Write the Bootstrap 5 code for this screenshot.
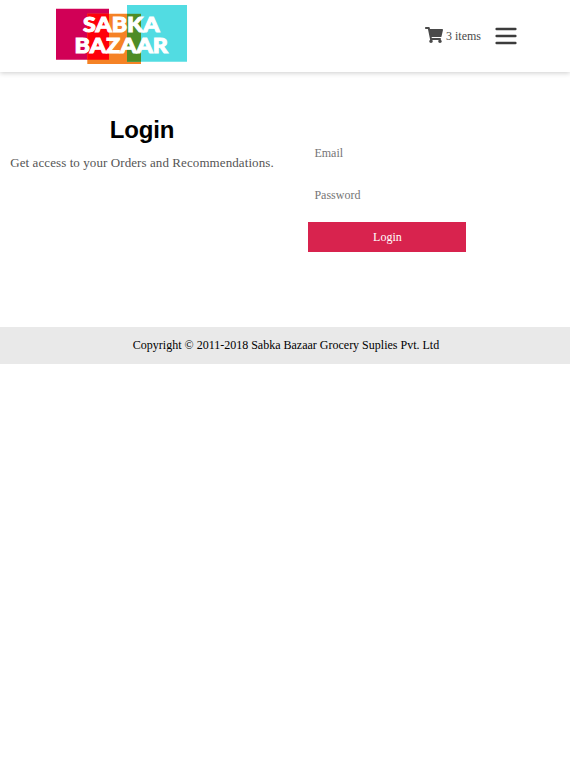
<!DOCTYPE html>
<html lang="en">
<head>
<meta charset="utf-8">
<meta name="viewport" content="width=device-width, initial-scale=1">
<title>Sabka Bazaar - Login</title>
<link href="https://cdn.jsdelivr.net/npm/bootstrap@5.3.0/dist/css/bootstrap.min.css" rel="stylesheet">
<style>
body{font-family:"Liberation Serif","Times New Roman",serif;font-size:12px;line-height:16px;color:#000;background:#fff}
.site-header{height:72px;padding:4px 53px 0 55px;box-shadow:0 1px 5px rgba(0,0,0,.2)}
.brand-art{width:133px;height:62px;font-family:Lato,sans-serif;font-weight:900}
.header-tools{height:64px;color:#4a4a4a}
.cart-icon{margin:0 3px 2px 0}
.menu-button{width:22px;height:18px;margin-left:14px}
.login-area{height:255px;padding-top:44px}
.intro{width:284px}
.intro h1{font:bold 24px/28px "Liberation Sans",Arial,sans-serif;letter-spacing:-.2px}
.intro p{font-size:13px;letter-spacing:.085px;color:#555;padding-top:11px}
.login-form{width:158px;margin-left:24.4px;padding-top:22px}
.login-form .form-control{height:30px;padding:0 6px;border:0;border-radius:0;font-size:12px;line-height:30px;margin-bottom:12px}
.login-form .form-control::placeholder{color:#757575}
.login-form .btn{height:30px;padding:0;font-size:12px;line-height:30px;background:#d8234e;color:#fff;border:0}
.site-footer{height:37px;line-height:36px;background:#e9e9e9;padding-left:2px}
</style>
<script src="https://cdn.jsdelivr.net/npm/bootstrap@5.3.0/dist/js/bootstrap.bundle.min.js" defer></script>
</head>
<body>
<header class="site-header d-flex justify-content-between align-items-start">
  <a href="#" aria-label="Sabka Bazaar">
    <svg class="brand-art d-block" viewBox="0 0 133 62">
      <path fill="#d10056" d="M1 4.7h53v51H1z"/>
      <path fill="#f58225" d="M32.3 9.8H86V60H32.3z"/>
      <path fill="#ff0009" d="M32.3 9.8H54v45.9H32.3z"/>
      <path fill="#52dce2" d="M72 1h60v56.8H72z"/>
      <path fill="#4e8c26" d="M72 9.8h14v48H72z"/>
      <g fill="#fff" stroke="#fff" stroke-width="1" font-size="20.5">
        <text x="28" y="28.3" textLength="76.5" lengthAdjust="spacingAndGlyphs">SABKA</text>
        <text x="19.5" y="48.7" textLength="93.5" lengthAdjust="spacingAndGlyphs">BAZAAR</text>
      </g>
    </svg>
  </a>
  <div class="header-tools d-flex align-items-center">
    <svg class="cart-icon" width="18" height="16" viewBox="0 0 576 512" fill="#4a4a4a"><path d="M528.12 301.319l47.273-208C578.806 78.301 567.391 64 551.99 64H159.208l-9.166-44.81C147.758 8.021 137.93 0 126.529 0H24C10.745 0 0 10.745 0 24v16c0 13.255 10.745 24 24 24h69.883l70.248 343.435C147.325 417.1 136 435.222 136 456c0 30.928 25.072 56 56 56s56-25.072 56-56c0-15.674-6.447-29.835-16.824-40h209.647C430.447 426.165 424 440.326 424 456c0 30.928 25.072 56 56 56s56-25.072 56-56c0-22.172-12.888-41.332-31.579-50.405l5.517-24.276c3.413-15.018-8.002-29.319-23.403-29.319H218.117l-6.545-32h293.145c11.206 0 20.92-7.754 23.403-18.681z"/></svg>
    <span>3 items</span>
    <button class="menu-button btn p-0 border-0 d-flex" aria-label="Menu"><svg width="22" height="18" viewBox="0 0 22 18" stroke="#3c3c3c" stroke-width="2.4" stroke-linecap="round"><path d="M1.6 2h18.8M1.6 9h18.8M1.6 16h18.8"/></svg></button>
  </div>
</header>
<main class="login-area d-flex">
  <section class="intro text-center">
    <h1 class="mb-0">Login</h1>
    <p class="mb-0 text-nowrap">Get access to your Orders and Recommendations.</p>
  </section>
  <form class="login-form">
    <input class="form-control" type="email" placeholder="Email" aria-label="Email">
    <input class="form-control" type="password" placeholder="Password" aria-label="Password">
    <button class="btn w-100 rounded-0 d-block" type="button">Login</button>
  </form>
</main>
<footer class="site-footer text-center">Copyright © 2011-2018 Sabka Bazaar Grocery Suplies Pvt. Ltd</footer>
</body>
</html>
